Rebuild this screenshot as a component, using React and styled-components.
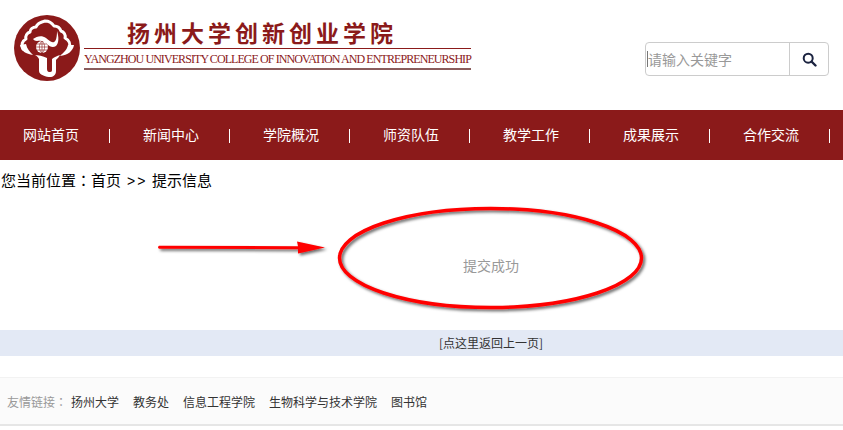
import React from 'react';
import styled, { createGlobalStyle } from 'styled-components';

const Global = createGlobalStyle`
  html, body { margin: 0; padding: 0; background: #fff; }
  body { font-family: "Noto Sans CJK SC", "Liberation Sans", sans-serif; overflow: hidden; }
  * { box-sizing: border-box; }
`;

const Page = styled.div`
  width: 843px;
  height: 430px;
  display: flex;
  flex-direction: column;
`;
const Header = styled.header`
  height: 110px;
  flex: none;
  display: flex;
  align-items: flex-start;
  padding: 15px 14px 0 14px;
`;
const Brand = styled.div`
  display: flex;
  gap: 4px;
`;
const Emblem = styled.svg`
  width: 66px;
  height: 66px;
  flex: none;
`;
const BrandText = styled.div`
  width: 387px;
  display: flex;
  flex-direction: column;
  margin-top: 1px;
`;
const CnTitle = styled.div`
  height: 32px;
  padding-left: 43px;
  font-family: "Noto Sans CJK SC", sans-serif;
  font-size: 23px;
  line-height: 32px;
  font-weight: 700;
  letter-spacing: 4px;
  color: #8b1a1a;
  white-space: nowrap;
`;
const RuleThin = styled.div`
  height: 1px;
  background: #8b1a1a;
`;
const EnTitle = styled.div`
  height: 19px;
  font-family: "Liberation Serif", serif;
  font-size: 12px;
  line-height: 21px;
  letter-spacing: -0.92px;
  color: #8b1a1a;
  white-space: nowrap;
`;
const RuleThick = styled.div`
  height: 2px;
  background: #8a5c5c;
`;
const Search = styled.div`
  margin-left: auto;
  margin-top: 27px;
  width: 184px;
  height: 34px;
  display: flex;
  border: 1px solid #ccc;
  border-radius: 4px;
`;
const SearchInput = styled.div`
  flex: 1;
  display: flex;
  align-items: center;
  padding-left: 1px;
  font-size: 14px;
  color: #999;
  white-space: nowrap;
`;
const Caret = styled.span`
  width: 1px;
  height: 16px;
  background: #777;
  flex: none;
`;
const SearchButton = styled.div`
  width: 39px;
  flex: none;
  border-left: 1px solid #ccc;
  display: flex;
  align-items: center;
  justify-content: center;
`;
const Nav = styled.nav`
  height: 50px;
  flex: none;
  background: #8b1a1a;
  display: flex;
`;
const NavItem = styled.div`
  width: 120px;
  flex: none;
  padding-left: 23px;
  display: flex;
  align-items: center;
  color: #fff;
  font-size: 14px;
  white-space: nowrap;
`;
const NavLabel = styled.span`
  width: 56px;
  margin-top: -3px;
`;
const NavSep = styled.span`
  width: 1px;
  height: 14px;
  margin: 2px 0 0 30px;
  background: #fff;
`;
const Crumb = styled.div`
  height: 42px;
  flex: none;
  padding: 10px 0 0 1px;
  font-size: 15px;
  line-height: 20px;
  color: #000;
  white-space: nowrap;
`;
const CrumbSep = styled.span`
  display: inline-block;
  width: 31px;
  padding-left: 6px;
  font-size: 14px;
  font-family: "Liberation Sans", sans-serif;
  letter-spacing: 2px;
`;
const Colon = styled.span`
  font-family: "Noto Sans CJK TC", sans-serif;
`;
const Message = styled.section`
  position: relative;
  height: 128px;
  flex: none;
  padding: 0 0 2px 139px;
  display: flex;
  align-items: center;
  justify-content: center;
  font-size: 14px;
  color: #999;
`;
const Annotation = styled.svg`
  position: absolute;
  left: 0;
  top: 0;
  width: 843px;
  height: 128px;
  overflow: visible;
`;
const BackBar = styled.div`
  height: 26px;
  flex: none;
  padding-left: 139px;
  background: #e3e9f5;
  text-align: center;
  font-size: 12px;
  line-height: 26px;
  color: #333;
`;
const Footer = styled.footer`
  margin-top: 21px;
  height: 49px;
  flex: none;
  display: flex;
  align-items: center;
  gap: 14px;
  padding: 0 0 0 7px;
  background: #fbfbfb;
  border-top: 1px solid #f2f2f2;
  border-bottom: 2px solid #e6e6e6;
  font-size: 12px;
  color: #333;
`;
const FooterLabel = styled.span`
  color: #999;
  width: 50px;
  white-space: nowrap;
`;

const navItems = ['网站首页', '新闻中心', '学院概况', '师资队伍', '教学工作', '成果展示', '合作交流'];
const links = ['扬州大学', '教务处', '信息工程学院', '生物科学与技术学院', '图书馆'];

const Logo = () => (
  <Emblem viewBox="0 0 66 66" aria-hidden="true">
    <circle cx="33" cy="33" r="33" fill="#8b1a1a" />
    <path
      d="M9 34c-2-4-1-8 3-10-1-3 1-6 4-7 0-3 3-5 6-5 1-3 5-5 9-6 3 0 7 2 9 5 3 0 6 2 7 5 3 1 5 4 4 7 4 2 6 6 4 11"
      fill="none"
      stroke="#fff"
      strokeWidth="3"
      strokeLinejoin="round"
      strokeLinecap="round"
    />
    <path d="M6 30c1 6 6 9 13 10-3-3-6-6-7-11z" fill="#fff" />
    <path d="M60 30c-1 6-6 10-14 11 3-3 7-6 8-11z" fill="#fff" />
    <path d="M19 24c4-3 9-4 13-1 3 2 5 5 8 4 2-1 3-5 3-11 2 6 2 12-1 15-3 2-6 1-9-2-3-3-6-4-10-3-2 0-3-1-4-2z" fill="#fff" />
    <circle cx="28" cy="32" r="6" fill="#fff" />
    <path d="M22 32h12M28 26v12M23 29h10M23 35h10M28 26c-3.500 3-3.500 9 0 12M28 26c3.500 3 3.500 9 0 12" stroke="#8b1a1a" strokeWidth="0.6" fill="none" />
    <path d="M21 40c3 0 8 1 12 3v11c0 2 1 3 2 3h1c2 0 2-1 2-3V44c2-2 5-3 8-4-1 2-3 4-4 5v11c0 4-3 6-6 6s-11-2-11-6V44c-1-2-2-3-4-4z" fill="#fff" />
  </Emblem>
);

export default function App() {
  return (
    <Page>
      <Global />
      <Header>
        <Brand>
          <Logo />
          <BrandText>
            <CnTitle>扬州大学创新创业学院</CnTitle>
            <RuleThin />
            <EnTitle>YANGZHOU UNIVERSITY COLLEGE OF INNOVATION AND ENTREPRENEURSHIP</EnTitle>
            <RuleThick />
          </BrandText>
        </Brand>
        <Search>
          <SearchInput>
            <Caret />
            请输入关键字
          </SearchInput>
          <SearchButton>
            <svg width="15" height="15" viewBox="0 0 15 15" aria-hidden="true">
              <circle cx="6.200" cy="6.200" r="4.500" fill="none" stroke="#1b2340" strokeWidth="2" />
              <path d="M9.500 9.500l4 4" stroke="#1b2340" strokeWidth="2.400" strokeLinecap="round" />
            </svg>
          </SearchButton>
        </Search>
      </Header>
      <Nav>
        {navItems.map((item) => (
          <NavItem key={item}>
            <NavLabel>{item}</NavLabel>
            <NavSep />
          </NavItem>
        ))}
      </Nav>
      <Crumb>
        您当前位置<Colon>：</Colon>首页<CrumbSep>&gt;&gt;</CrumbSep>提示信息
      </Crumb>
      <Message>
        提交成功
        <Annotation viewBox="0 0 843 128" aria-hidden="true">
          <defs>
            <filter id="sh" x="-10%" y="-30%" width="120%" height="160%">
              <feDropShadow dx="2" dy="2" stdDeviation="1.500" floodColor="#000" floodOpacity="0.6" />
            </filter>
          </defs>
          <g filter="url(#sh)">
            <ellipse cx="490.500" cy="56" rx="151" ry="49.500" fill="none" stroke="#f00" strokeWidth="3.500" />
            <path d="M159 43.800L298 44.200 297 39.500 325 45.500 298 51.500 298 47.200 159 46.800Q157 45.300 159 43.800z" fill="#f00" />
          </g>
        </Annotation>
      </Message>
      <BackBar>[点这里返回上一页]</BackBar>
      <Footer>
        <FooterLabel>
          友情链接<Colon>：</Colon>
        </FooterLabel>
        {links.map((link) => (
          <span key={link}>{link}</span>
        ))}
      </Footer>
    </Page>
  );
}
